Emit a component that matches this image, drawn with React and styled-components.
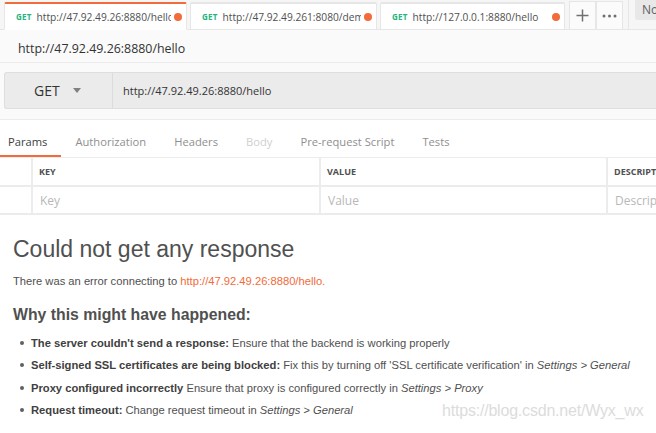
import React from "react";
import styled, { createGlobalStyle } from "styled-components";

const Global = createGlobalStyle`
  html, body { margin: 0; padding: 0; background: #fff; overflow: hidden; }
  * { box-sizing: border-box; }
`;

const Page = styled.div`
  width: 656px;
  height: 433px;
  position: relative;
  overflow: hidden;
  background: #fff;
  font-family: "Open Sans", "Liberation Sans", sans-serif;
`;

const TabBar = styled.div`
  height: 30px;
  display: flex;
  align-items: flex-end;
  padding-left: 4px;
  background: #f6f6f6;
  border-bottom: 1px solid #e6e6e6;
  position: relative;
`;

const Tab = styled.div`
  width: ${(p) => p.w}px;
  height: 28px;
  display: flex;
  align-items: center;
  padding: 0 4px 0 11px;
  margin-right: ${(p) => p.mr}px;
  background: #fff;
  border: 1px solid #e6e6e6;
  border-top: 2px solid ${(p) => (p.active ? "#f26b3a" : "#e6e6e6")};
  border-bottom: ${(p) => (p.active ? "1px solid #fff" : "1px solid #e6e6e6")};
  margin-bottom: -1px;
  border-radius: 2px 2px 0 0;
  white-space: nowrap;
  overflow: hidden;
`;

const Method = styled.span`
  color: #26b47f;
  font-size: 8px;
  font-weight: 700;
  margin-right: 5px;
  letter-spacing: 0.2px;
`;

const TabUrl = styled.span`
  flex: 1;
  color: #505050;
  font-size: 10.2px;
  overflow: hidden;
  white-space: nowrap;
`;

const Dot = styled.span`
  width: 8px;
  height: 8px;
  border-radius: 50%;
  background: #f26b3a;
  margin-left: 3px;
  flex: none;
`;

const IconBtn = styled.div`
  width: 27px;
  height: 28px;
  display: flex;
  align-items: center;
  justify-content: center;
  background: #fbfbfb;
  border: 1px solid #e6e6e6;
  border-bottom: none;
  margin-left: ${(p) => p.ml || 0}px;
  color: #707070;
`;

const EnvBox = styled.div`
  position: absolute;
  left: 635px;
  top: 0;
  width: 40px;
  height: 20px;
  background: #e8e8e8;
  border-radius: 0 0 0 3px;
  color: #606060;
  font-size: 12px;
  padding: 1px 0 0 7px;
`;

const Divider = styled.div`
  position: absolute;
  left: 628px;
  top: 0;
  width: 1px;
  height: 30px;
  background: #e6e6e6;
`;

const TitleBar = styled.div`
  height: 33px;
  background: #fafafa;
  border-bottom: 1px solid #ececec;
  display: flex;
  align-items: center;
  padding: 5px 0 0 18px;
  font-size: 12.4px;
  color: #333;
`;

const RequestArea = styled.div`
  padding: 9px 0 10px 4px;
  background: #fafafa;
  border-bottom: 1px solid #ececec;
`;

const RequestBar = styled.div`
  height: 37px;
  display: flex;
  background: #ebebeb;
  border: 1px solid #dedede;
  border-right: none;
  border-radius: 3px 0 0 3px;
`;

const MethodSelect = styled.div`
  width: 108px;
  display: flex;
  align-items: center;
  padding-left: 29px;
  gap: 13px;
  font-size: 14px;
  color: #333;
  border-right: 1px solid #dcdcdc;
`;

const UrlInput = styled.div`
  flex: 1;
  display: flex;
  align-items: center;
  padding-left: 10px;
  font-size: 11px;
  color: #333;
`;

const ReqTabs = styled.div`
  height: 37px;
  display: flex;
  background: #fff;
`;

const ReqTab = styled.div`
  height: 37px;
  display: flex;
  align-items: center;
  padding: 8px 14px 0 ${(p) => (p.first ? 8 : 14)}px;
  font-size: 11.2px;
  color: ${(p) => (p.active ? "#404040" : p.dim ? "#cfcfcf" : "#8f8f8f")};
  border-bottom: 2px solid ${(p) => (p.active ? "#f26b3a" : "transparent")};
`;

const Table = styled.div`
  display: grid;
  grid-template-columns: 31px 288px 287px 1fr;
  border-top: 1px solid #ececec;
`;

const Cell = styled.div`
  height: ${(p) => (p.head ? 29 : 28)}px;
  display: flex;
  align-items: center;
  padding-left: ${(p) => (p.head ? 6 : 7)}px;
  border-left: ${(p) => (p.first ? "none" : "2px solid #ececec")};
  border-bottom: 2px solid #ececec;
  font-size: ${(p) => (p.head ? "9px" : "12px")};
  font-weight: ${(p) => (p.head ? 700 : 400)};
  color: ${(p) => (p.head ? "#505050" : "#b8b8b8")};
  white-space: nowrap;
  overflow: hidden;
`;

const Response = styled.div`
  padding: 19px 0 0 13px;
  font-family: "Liberation Sans", Arial, sans-serif;
  color: #505050;
`;

const BigTitle = styled.h1`
  margin: 0;
  font-size: 23px;
  font-weight: 400;
  line-height: 30px;
  color: #505050;
`;

const Para = styled.p`
  margin: 10px 0 0;
  font-size: 11.2px;
  line-height: 14px;
  color: #505050;
`;

const Link = styled.span`
  color: #f26b3a;
`;

const SubTitle = styled.h2`
  margin: 17px 0 0;
  font-size: 15.8px;
  font-weight: 700;
  line-height: 20px;
  color: #505050;
`;

const List = styled.ul`
  margin: 8px 0 0;
  padding: 0 0 0 18px;
  list-style: none;
`;

const Item = styled.li`
  position: relative;
  font-size: 11.2px;
  line-height: 14px;
  height: 22.4px;
  padding-top: 3px;
  color: #505050;
  &::before {
    content: "";
    position: absolute;
    left: -11px;
    top: 8px;
    width: 4px;
    height: 4px;
    border-radius: 50%;
    background: #606060;
  }
  b { color: #404040; }
  i { font-style: italic; }
`;

const Watermark = styled.div`
  position: absolute;
  left: 442px;
  top: 402px;
  font-family: "Liberation Sans", Arial, sans-serif;
  font-size: 16px;
  color: #dcdcdc;
  letter-spacing: -0.2px;
`;

const tabs = [
  { url: "http://47.92.49.26:8880/hello", w: 183, mr: 3, active: true },
  { url: "http://47.92.49.261:8080/demo", w: 187, mr: 3 },
  { url: "http://127.0.0.1:8880/hello", w: 185, mr: 0 },
];

const reqTabs = ["Params", "Authorization", "Headers", "Body", "Pre-request Script", "Tests"];

export default function App() {
  return (
    <Page>
      <Global />
      <TabBar>
        {tabs.map((t, i) => (
          <Tab key={i} w={t.w} mr={t.mr} active={t.active}>
            <Method>GET</Method>
            <TabUrl>{t.url}</TabUrl>
            <Dot />
          </Tab>
        ))}
        <IconBtn ml={4}>
          <svg width="13" height="13" viewBox="0 0 13 13">
            <path d="M6.5 0.5v12M0.5 6.5h12" stroke="#707070" strokeWidth="1.5" />
          </svg>
        </IconBtn>
        <IconBtn>
          <svg width="15" height="4" viewBox="0 0 15 4">
            <circle cx="2" cy="2" r="1.5" fill="#707070" />
            <circle cx="7.5" cy="2" r="1.5" fill="#707070" />
            <circle cx="13" cy="2" r="1.5" fill="#707070" />
          </svg>
        </IconBtn>
        <Divider />
        <EnvBox>No</EnvBox>
      </TabBar>
      <TitleBar>http://47.92.49.26:8880/hello</TitleBar>
      <RequestArea>
        <RequestBar>
          <MethodSelect>
            GET
            <svg width="8" height="5" viewBox="0 0 8 5">
              <path d="M0 0h8L4 5z" fill="#808080" />
            </svg>
          </MethodSelect>
          <UrlInput>http://47.92.49.26:8880/hello</UrlInput>
        </RequestBar>
      </RequestArea>
      <ReqTabs>
        {reqTabs.map((t, i) => (
          <ReqTab key={t} first={i === 0} active={i === 0} dim={t === "Body"}>
            {t}
          </ReqTab>
        ))}
      </ReqTabs>
      <Table>
        <Cell head first />
        <Cell head>KEY</Cell>
        <Cell head>VALUE</Cell>
        <Cell head>DESCRIPTION</Cell>
        <Cell first />
        <Cell>Key</Cell>
        <Cell>Value</Cell>
        <Cell>Description</Cell>
      </Table>
      <Response>
        <BigTitle>Could not get any response</BigTitle>
        <Para>
          There was an error connecting to <Link>http://47.92.49.26:8880/hello.</Link>
        </Para>
        <SubTitle>Why this might have happened:</SubTitle>
        <List>
          <Item>
            <b>The server couldn't send a response:</b> Ensure that the backend is working properly
          </Item>
          <Item>
            <b>Self-signed SSL certificates are being blocked:</b> Fix this by turning off 'SSL certificate verification' in <i>Settings &gt; General</i>
          </Item>
          <Item>
            <b>Proxy configured incorrectly</b> Ensure that proxy is configured correctly in <i>Settings &gt; Proxy</i>
          </Item>
          <Item>
            <b>Request timeout:</b> Change request timeout in <i>Settings &gt; General</i>
          </Item>
        </List>
      </Response>
      <Watermark>https://blog.csdn.net/Wyx_wx</Watermark>
    </Page>
  );
}
